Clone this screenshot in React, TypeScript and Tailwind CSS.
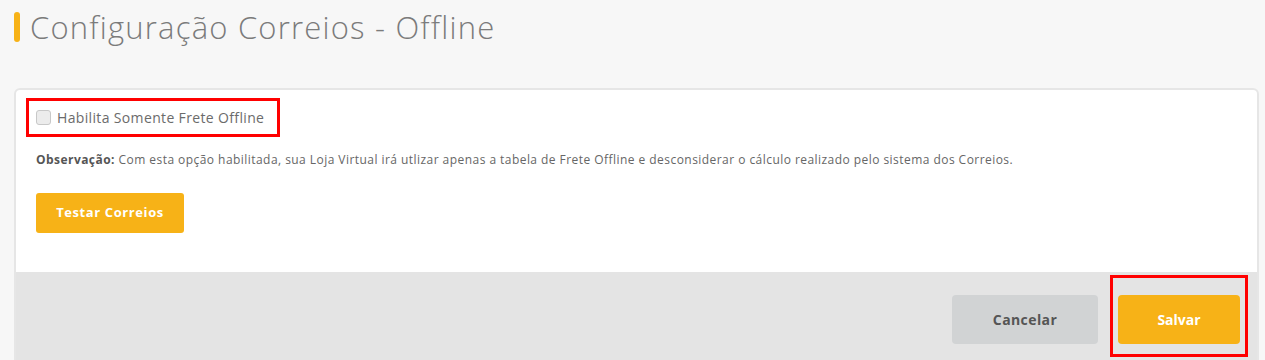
export default function App() {
  return (
    <div className="min-h-screen bg-[#f7f7f7] px-[14px] pr-[6px] font-['Open_Sans',sans-serif]">
      <div className="flex items-center gap-[10px] pt-[12px]">
        <span className="block h-[30px] w-[6px] rounded-full bg-[#f7b217]" />
        <h1 className="text-[31px] font-light leading-[30px] text-[#7b7b7b] tracking-[1.2px]">
          Configuração Correios - Offline
        </h1>
      </div>

      <div className="mt-[46px] overflow-hidden rounded-[6px] border-2 border-[#e6e6e6] bg-white">
        <div className="px-[10px] pt-[8px] pb-[39px]">
          <label className="inline-flex h-[39px] items-center gap-[6px] border-[3px] border-[#ff0000] pl-[7px] pr-[13px]">
            <span className="block h-[15px] w-[15px] rounded-[3px] border border-[#c8c8c8] bg-[#ececec]" />
            <span className="text-[14px] tracking-[0.35px] text-[#6b6b6b]">Habilita Somente Frete Offline</span>
          </label>
          <p className="mt-[14px] pl-[10px] text-[12px] tracking-[0.45px] text-[#666]">
            <b className="font-bold text-[#555]">Observação:</b> Com esta opção habilitada, sua Loja Virtual irá utlizar apenas a tabela de Frete Offline e desconsiderar o cálculo realizado pelo sistema dos Correios.
          </p>
          <button className="ml-[10px] mt-[24px] h-[40px] w-[148px] rounded-[3px] bg-[#f7b217] text-[13px] font-bold tracking-[0.6px] text-white">
            Testar Correios
          </button>
        </div>
        <div className="flex items-start justify-end gap-[12px] bg-[#e4e4e4] pt-[3px] pr-[9px] pb-[24px]">
          <button className="mt-[20px] h-[49px] w-[146px] rounded-[4px] bg-[#d1d3d4] text-[14px] font-bold tracking-[0.4px] text-[#555]">
            Cancelar
          </button>
          <div className="border-[3px] border-[#ff0000] px-[5px] pt-[17px] pb-[10px]">
            <button className="h-[49px] w-[122px] rounded-[4px] bg-[#f7b217] text-[14px] font-bold text-white">
              Salvar
            </button>
          </div>
        </div>
      </div>
    </div>
  )
}
